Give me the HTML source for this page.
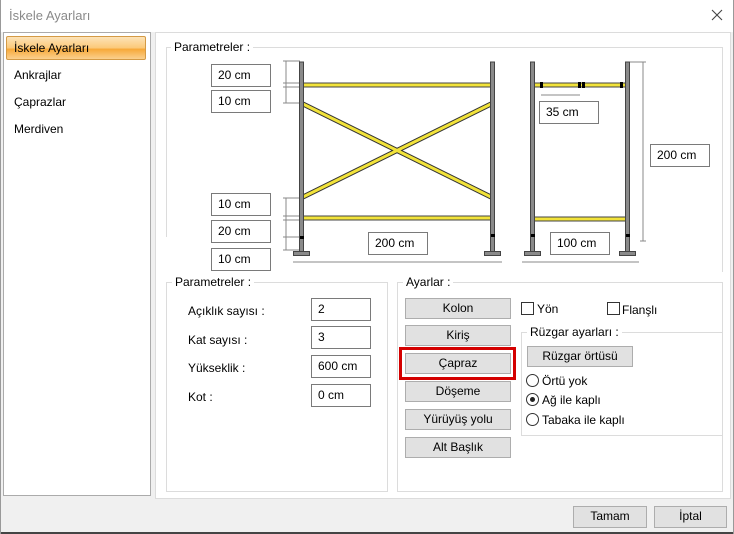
<!DOCTYPE html>
<html><head><meta charset="utf-8"><style>
*{box-sizing:border-box;margin:0;padding:0}
body{width:734px;height:534px;background:#f0f0f0;font-family:"Liberation Sans",sans-serif;font-size:12px;color:#000;position:relative;overflow:hidden}
.a{position:absolute}
.tb{position:absolute;background:#fff;border:1px solid #7a7a7a;padding:3px 0 0 6px;font-size:12px;height:23px;width:60px}
.btn{position:absolute;background:#e1e1e1;border:1px solid #adadad;text-align:center;font-size:12px;line-height:18px;height:21px;width:106px}
.grp{position:absolute;border:1px solid #dcdcdc}
.lg{position:absolute;background:#fff;padding:0 3px;top:-8px;left:5px;font-size:12px;line-height:14px}
.cb{position:absolute;width:13px;height:13px;border:1px solid #333;background:#fff}
.rd{position:absolute;width:13px;height:13px;border:1px solid #333;border-radius:50%;background:#fff}
</style></head><body>
<div class="a" style="left:0;top:0;width:734px;height:32px;background:#fff"></div>
<div class="a" style="left:9px;top:8px;color:#8a8a8a;font-size:13px">İskele Ayarları</div>
<svg class="a" style="left:711px;top:9px" width="12" height="12"><path d="M1 1L11 11M11 1L1 11" stroke="#444" stroke-width="1.1"/></svg>
<div class="a" style="left:0;top:532px;width:734px;height:2px;background:#444"></div>
<div class="a" style="left:0;top:0;width:1px;height:534px;background:#999"></div>
<div class="a" style="left:733px;top:0;width:1px;height:534px;background:#999"></div>
<!-- left list -->
<div class="a" style="left:3px;top:32px;width:148px;height:464px;background:#fff;border:1px solid #ababab"></div>
<div class="a" style="left:6px;top:36px;width:140px;height:24px;border:1px solid #d49a45;border-radius:2px;background:linear-gradient(#fde3b8,#fbc979 50%,#f7a838 55%,#fbd08e)"></div>
<div class="a" style="left:14px;top:41px">İskele Ayarları</div>
<div class="a" style="left:14px;top:68px">Ankrajlar</div>
<div class="a" style="left:14px;top:95px">Çaprazlar</div>
<div class="a" style="left:14px;top:122px">Merdiven</div>
<!-- right panel -->
<div class="a" style="left:155px;top:32px;width:576px;height:467px;background:#fff;border:1px solid #dcdcdc"></div>
<div class="a" style="left:166px;top:47px;width:557px;height:1px;background:#dcdcdc"></div>
<div class="a" style="left:166px;top:47px;width:1px;height:190px;background:#dcdcdc"></div>
<div class="a" style="left:722px;top:47px;width:1px;height:225px;background:#dcdcdc"></div>
<div class="a" style="left:171px;top:40px;background:#fff;padding:0 3px">Parametreler :</div>
<svg class="a" style="left:0;top:0" width="734" height="534">
<g stroke="#888" stroke-width="1" fill="none">
<line x1="286" y1="61" x2="286" y2="103"/><line x1="283" y1="61" x2="300" y2="61"/><line x1="283" y1="83" x2="300" y2="83"/><line x1="283" y1="87" x2="300" y2="87"/><line x1="283" y1="103" x2="300" y2="103"/>
<line x1="286" y1="198" x2="286" y2="250"/><line x1="283" y1="198" x2="300" y2="198"/><line x1="283" y1="216" x2="300" y2="216"/><line x1="283" y1="220" x2="300" y2="220"/><line x1="283" y1="237" x2="300" y2="237"/><line x1="283" y1="250" x2="300" y2="250"/>
<line x1="293" y1="262" x2="502" y2="262"/>
<line x1="541" y1="95" x2="580" y2="95"/>
<line x1="643" y1="62" x2="643" y2="241"/><line x1="629" y1="62" x2="646" y2="62"/><line x1="640" y1="241" x2="646" y2="241"/>
<line x1="522" y1="262" x2="639" y2="262"/>
</g>
<g stroke="#333" stroke-width="0.8">
<line x1="303" y1="104" x2="491" y2="197" stroke-width="5"/>
<line x1="303" y1="197" x2="491" y2="104" stroke-width="5"/>
</g>
<g stroke="#f2e33a" stroke-width="3">
<line x1="303" y1="104" x2="491" y2="197"/>
<line x1="303" y1="197" x2="491" y2="104"/>
</g>
<g fill="#f2e33a" stroke="#444" stroke-width="1">
<rect x="303" y="83" width="188" height="4"/><rect x="303" y="216" width="188" height="4"/>
<rect x="534" y="83" width="92" height="4"/><rect x="534" y="217" width="92" height="4"/>
</g>
<g fill="#8a8a8a" stroke="#444" stroke-width="1">
<rect x="299.5" y="62" width="4" height="190"/><rect x="490.5" y="62" width="4" height="190"/>
<rect x="293.5" y="251.5" width="16" height="4"/><rect x="484.5" y="251.5" width="16" height="4"/>
<rect x="530.5" y="62" width="4" height="190"/><rect x="625.5" y="62" width="4" height="190"/>
<rect x="524.5" y="251.5" width="16" height="4"/><rect x="619.5" y="251.5" width="16" height="4"/>
</g>
<g fill="#000">
<rect x="300" y="236" width="4" height="3"/><rect x="491" y="234" width="4" height="3"/>
<rect x="531" y="234" width="4" height="3"/><rect x="626" y="234" width="4" height="3"/>
<rect x="540" y="82" width="3" height="6"/><rect x="578" y="82" width="3" height="6"/><rect x="582" y="82" width="3" height="6"/><rect x="620" y="82" width="3" height="6"/>
</g>
</svg>
<div class="tb" style="left:211px;top:64px">20 cm</div>
<div class="tb" style="left:211px;top:90px">10 cm</div>
<div class="tb" style="left:211px;top:193px">10 cm</div>
<div class="tb" style="left:211px;top:220px">20 cm</div>
<div class="tb" style="left:211px;top:248px">10 cm</div>
<div class="tb" style="left:368px;top:232px">200 cm</div>
<div class="tb" style="left:539px;top:101px">35 cm</div>
<div class="tb" style="left:650px;top:144px">200 cm</div>
<div class="tb" style="left:550px;top:232px">100 cm</div>
<!-- lower left group -->
<div class="grp" style="left:166px;top:282px;width:222px;height:210px"><div class="lg">Parametreler :</div></div>
<div class="a" style="left:188px;top:304px">Açıklık sayısı :</div>
<div class="a" style="left:188px;top:333px">Kat sayısı :</div>
<div class="a" style="left:188px;top:361px">Yükseklik :</div>
<div class="a" style="left:188px;top:390px">Kot :</div>
<div class="tb" style="left:311px;top:298px">2</div>
<div class="tb" style="left:311px;top:326px">3</div>
<div class="tb" style="left:311px;top:355px">600 cm</div>
<div class="tb" style="left:311px;top:384px">0 cm</div>
<!-- right group -->
<div class="grp" style="left:397px;top:282px;width:326px;height:210px"><div class="lg">Ayarlar :</div></div>
<div class="btn" style="left:405px;top:298px">Kolon</div>
<div class="btn" style="left:405px;top:325px">Kiriş</div>
<div class="btn" style="left:405px;top:353px">Çapraz</div>
<div class="a" style="left:399px;top:347px;width:117px;height:33px;border:3px solid #d40000"></div>
<div class="btn" style="left:405px;top:381px">Döşeme</div>
<div class="btn" style="left:405px;top:409px">Yürüyüş yolu</div>
<div class="btn" style="left:405px;top:437px">Alt Başlık</div>
<div class="cb" style="left:521px;top:302px"></div><div class="a" style="left:537px;top:302px">Yön</div>
<div class="cb" style="left:607px;top:302px"></div><div class="a" style="left:622px;top:303px">Flanşlı</div>
<div class="grp" style="left:521px;top:332px;width:202px;height:104px"><div class="lg">Rüzgar ayarları :</div></div>
<div class="btn" style="left:527px;top:346px;width:106px">Rüzgar örtüsü</div>
<div class="rd" style="left:526px;top:374px"></div><div class="a" style="left:542px;top:374px">Örtü yok</div>
<div class="rd" style="left:526px;top:393px"></div><div class="a" style="left:530px;top:397px;width:5px;height:5px;border-radius:50%;background:#222"></div><div class="a" style="left:542px;top:393px">Ağ ile kaplı</div>
<div class="rd" style="left:526px;top:413px"></div><div class="a" style="left:542px;top:413px">Tabaka ile kaplı</div>
<!-- bottom -->
<div class="btn" style="left:573px;top:506px;width:74px;height:22px">Tamam</div>
<div class="btn" style="left:654px;top:506px;width:73px;height:22px">İptal</div>
</body></html>
